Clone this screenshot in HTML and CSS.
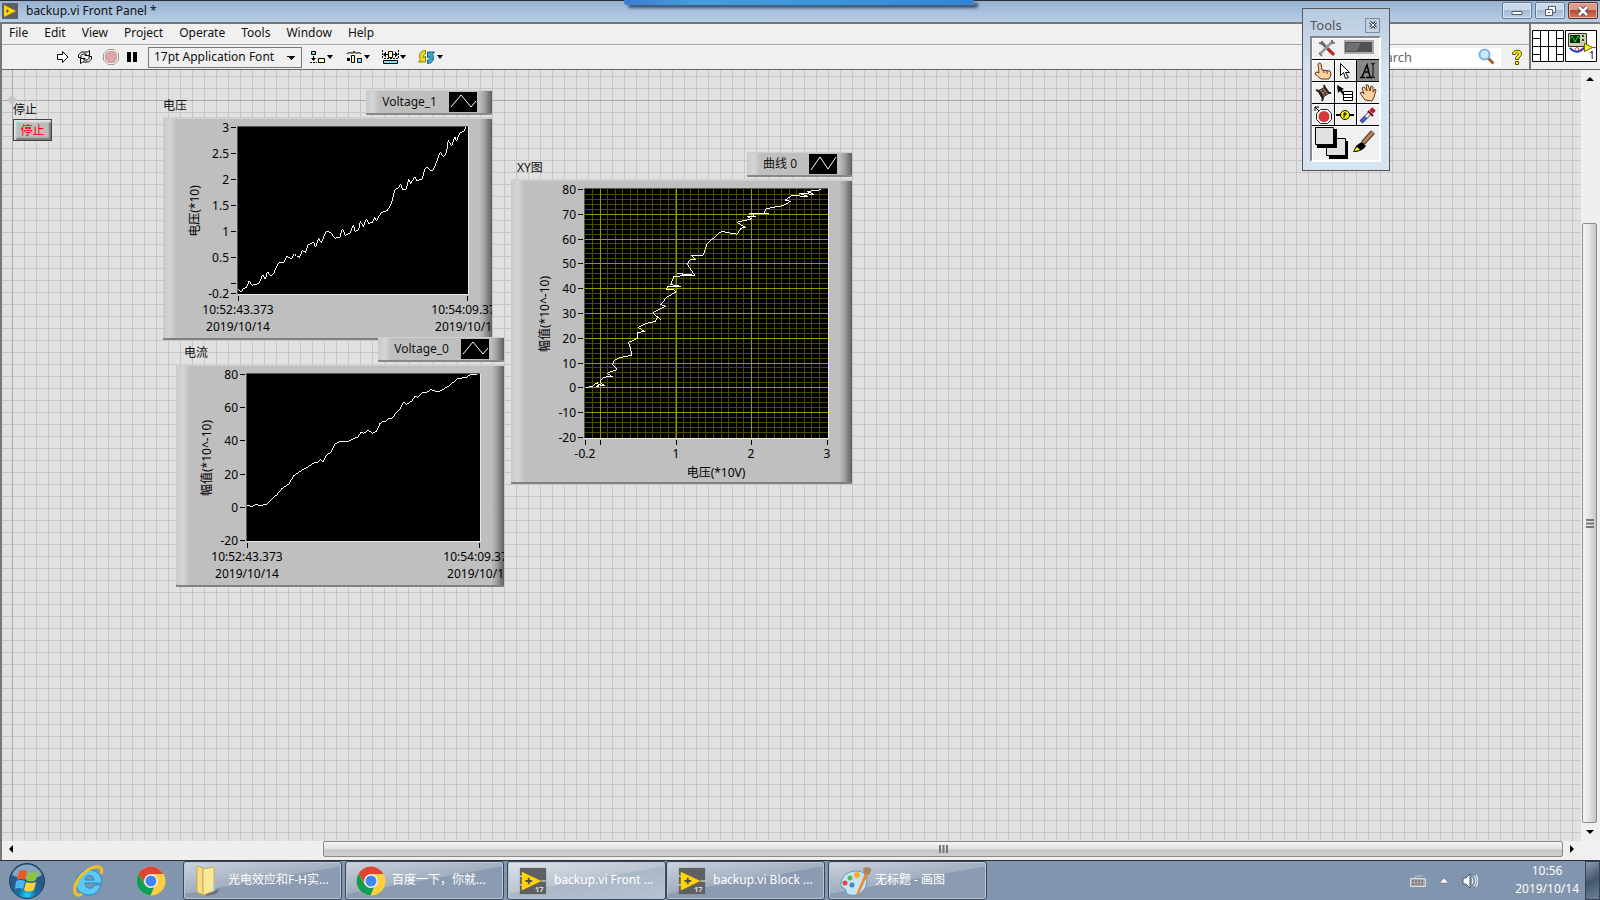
FILE: index.html
```html
<!DOCTYPE html>
<html lang="zh-CN">
<head>
<meta charset="utf-8">
<title>backup.vi Front Panel *</title>
<link rel="stylesheet" href="styles.css">
</head>
<body>
<svg class="defs" aria-hidden="true">
  <defs>
    <symbol id="lv" viewBox="0 0 32 28"><path d="M2 0h28v28H2z" fill="#5f6062"/><path d="M0 9h6M0 18h6M25 14h7" stroke="#b9c3cc" stroke-width="1.5"/><path d="M4 4l21 10L4 24z" fill="#ffd400"/><path d="M8 14h7M11.500 10.500v7" stroke="#505050" stroke-width="2"/><text x="18" y="26" font-size="8" font-weight="700" fill="#ddd" font-family="Noto Sans">17</text></symbol>
    <symbol id="chrome" viewBox="0 0 30 30"><circle cx="15" cy="15" r="14.500" fill="#ffcd42"/><path d="M2.500 7.700A14.500 14.500 0 0 1 27.600 8H15a7 7 0 0 0-6.500 9z" fill="#db4437"/><path d="M2.500 7.700L8.800 18.500A7 7 0 0 0 18 21.300L14.500 29.500A14.500 14.500 0 0 1 2.500 7.700z" fill="#0f9d58"/><circle cx="15" cy="15" r="6.800" fill="#f5f5f5"/><circle cx="15" cy="15" r="5.500" fill="#4285f4"/></symbol>
    <symbol id="wave" viewBox="0 0 28 20"><path d="M0 0h28v20H0z"/><path d="M2 15L12 3l10 12 5-6" fill="none" stroke="#fff"/></symbol>
  </defs>
</svg>
<div class="window">
  <header class="titlebar">
    <svg class="app-icon" width="16" height="16" viewBox="0 0 16 16"><path d="M0 0h16v16H0z" fill="#5f6062"/><path d="M2 2l12 6-12 6z" fill="#ffd400"/><path d="M4 8h3M5.500 6.500v3" stroke="#555"/></svg>
    <span class="title">backup.vi Front Panel *</span>
    <div class="peek"></div>
    <div class="win-buttons">
      <button aria-label="Minimize"><svg width="12" height="10"><path d="M1 5.500h10v3H1z" fill="#fff" stroke="#555b66"/></svg></button>
      <button aria-label="Restore"><svg width="13" height="12"><path d="M4.500 1.500h7v6h-7z" fill="#fff" stroke="#555b66"/><path d="M1.500 4.500h7v6h-7z" fill="#fff" stroke="#555b66"/><path d="M4 7h2v1H4z" fill="#555b66"/></svg></button>
      <button class="close" aria-label="Close"><svg width="14" height="12"><path d="M3 2l8 8M11 2l-8 8" stroke="#4b4450" stroke-width="4.500"/><path d="M3 2l8 8M11 2l-8 8" stroke="#fff" stroke-width="2.500"/></svg></button>
    </div>
  </header>

  <div class="top">
    <div class="bars">
      <nav class="menubar">
        <button>File</button><button>Edit</button><button>View</button><button>Project</button><button>Operate</button><button>Tools</button><button>Window</button><button>Help</button>
      </nav>
      <div class="toolbar">
        <button aria-label="Run"><svg width="12" height="14"><path d="M.5 4.500h5v-3L11 7l-5.500 5.500v-3h-5z" fill="#fff" stroke="#000"/></svg></button>
        <button aria-label="Run continuously" class="loop"><svg width="16" height="14"><path d="M1.500 7.500V5l3-3h6l2-1.500v5H8L9.500 4h-4L4 5.500v2z" fill="#fff" stroke="#000"/><path d="M14.500 6.500V9l-3 3h-6l-2 1.500v-5H8L6.500 10h4L12 8.500v-2z" fill="#fff" stroke="#000"/></svg></button>
        <button aria-label="Abort"><svg width="16" height="16"><path d="M5 .5h6L15.500 5v6L11 15.500H5L.5 11V5z" fill="#eee" stroke="#999"/><path d="M5.500 2.500h5l3 3v5l-3 3h-5l-3-3v-5z" fill="#dda7aa" stroke="#c99"/></svg></button>
        <button aria-label="Pause" class="pause"><svg width="10" height="12"><path d="M0 1h4v10H0zM6 1h4v10H6z"/></svg></button>
        <select class="font" aria-label="Font"><option>17pt Application Font</option></select>
        <button aria-label="Align"><svg width="24" height="14"><path d="M1.500 1.500h4v3h-4z" fill="#7de3f4" stroke="#000"/><path d="M8.500 8.500h6v4h-6z" fill="#ffffa8" stroke="#000"/><path d="M0 12.500h7" stroke="#000" stroke-dasharray="2 1"/><path d="M3 6h1v2h2l-2.500 3L1 8h2zM17 5h6l-3 4z"/></svg></button>
        <button aria-label="Distribute"><svg width="24" height="14"><path d="M1 4c1-2 3-1 6-1 1 0 1-1 1-2 0 1 0 2 2 2 3 0 4-1 5 1" fill="none" stroke="#000"/><path d="M5.500 5.500h3v7h-3z" fill="#ffffa8" stroke="#000"/><path d="M11.500 8.500h4v4h-4z" fill="#7de3f4" stroke="#000"/><path d="M1 8h3v3H1zM18 5h6l-3 4z"/></svg></button>
        <button aria-label="Resize"><svg width="24" height="14"><path d="M6.500 1.500h4v6h-4z" fill="#ffffa8" stroke="#000"/><path d="M1.500 10.500h14v3h-14z" fill="#7de3f4" stroke="#000"/><path d="M.5 0v9M16.500 0v9M2 8.500h14" stroke="#000" stroke-dasharray="2 1"/><path d="M1 4.500l3-3V4h2v1H4v2.500zM16 4.500l-3-3V4h-2v1h2v2.500zM18 5h6l-3 4z"/></svg></button>
        <button aria-label="Reorder"><svg width="26" height="16"><path d="M7.500 1.500C2 1.500 0 7 2.500 10.500L.5 13h7V7L5.500 9C4.500 7.500 5.500 5.500 7.500 5z" fill="#e8dc20" stroke="#877e00"/><path d="M9.500 14.500c5.500 0 7.500-5.500 5-9l2-2.500h-7v6l2-2c1 1.500 0 3.500-2 4z" fill="#35a9c5" stroke="#126379"/><path d="M19 6h6l-3 4z"/></svg></button>
        <div class="search"><input aria-label="Search" placeholder="Search"><svg width="18" height="18"><path d="M9.500 9.500l6 6" stroke="#a65c2c" stroke-width="3"/><circle cx="6.500" cy="6.500" r="5" fill="#c8eaff" stroke="#7daee8" stroke-width="2"/></svg></div>
        <button class="help" aria-label="Help"><svg width="12" height="16"><path d="M1.500 5.500C1 0 11 0 10.500 5c0 3-3 3-3 5.500h-3C4 7 7.500 6.500 7.500 5c0-2-3-2-3 .5zM4.500 12.500h3v3h-3z" fill="#fff200" stroke="#555000"/></svg></button>
      </div>
    </div>
    <div class="vi-pane">
      <svg width="32" height="32"><path d="M.5.500h31v31H.5zM0 16.500h32M8.500 0v32M16.500 0v32M24.500 0v32M0 8.500h8M0 24.500h8M24 8.500h8M24 24.500h8" fill="#fff" stroke="#000"/></svg>
      <svg width="32" height="32"><path d="M.5.500h31v31H.5z" fill="#fff" stroke="#000"/><path d="M3.500 3.500h18v13h-18z" fill="#d0cdb0" stroke="#333"/><path d="M5 5h10v8H5z" fill="#062d08"/><path d="M5 9l2-3 3 6 3-6 2 3" fill="none" stroke="#24d634"/><circle cx="18" cy="6" r="1"/><circle cx="18" cy="10" r="1"/><path d="M5 18c4 5 9 5 14 0" fill="none" stroke="#1635c9" stroke-width="2"/><path d="M10 21c0-5 4-4 4-1s4-3 6-3" fill="none" stroke="#e22"/><path d="M19.500 13.500l8 4-8 4z" fill="#ff0" stroke="#660"/><path d="M27 17.500h4" stroke="#e22"/><text x="24" y="29" font-size="10" font-family="Noto Sans">1</text></svg>
    </div>
  </div>

  <main class="workspace">
    <div class="canvas">
      <svg class="origin" width="10" height="10"><path d="M5 0l5 5-5 5-5-5z" fill="#c4c4c4"/></svg>
      <div class="stop"><label for="stop">停止</label><button id="stop">停止</button></div>

      <section class="obj v1">
        <h2>电压</h2>
        <div class="legend"><span>Voltage_1</span><svg width="28" height="20"><use href="#wave"/></svg></div>
        <svg class="panel" width="329" height="223" viewBox="163 117 329 223">
          <path d="M238 127h230v167H238z"/><path class="lo" d="M237.500 294V126.500H468"/><path class="hi" d="M468.500 127v167.500H238"/>
          <path class="tick" d="M231 127.500h5M231 153.500h5M231 179.500h5M231 205.500h5M231 231.500h5M231 257.500h5M231 283.500h5M231 293.500h5M238.500 296v5M467.500 296v5"/>
          <g class="y"><text x="229" y="132">3</text><text x="229" y="158">2.5</text><text x="229" y="184">2</text><text x="229" y="210">1.5</text><text x="229" y="236">1</text><text x="229" y="262">0.5</text><text x="229" y="298">-0.2</text></g>
          <g class="x"><text x="238" y="314">10:52:43.373</text><text x="238" y="331">2019/10/14</text><text x="467" y="314">10:54:09.373</text><text x="467" y="331">2019/10/14</text></g>
          <text class="x" transform="translate(199 211) rotate(-90)">电压(*10)</text>
          <g transform="translate(150 80) scale(.33333)"><polyline class="trace" points="265,626 273,637 280,627 290,622 298,602 305,616 318,613 328,608 338,584 346,598 352,575 362,587 370,582 386,548 401,549 411,529 425,536 433,521 440,529 449,532 457,512 467,517 473,496 491,486 496,502 506,475 514,488 524,464 530,454 544,458 554,475 570,471 577,446 586,466 600,460 610,434 616,455 626,448 631,424 640,440 649,416 656,431 668,426 674,412 680,422 692,400 713,390 724,370 734,330 745,323 752,311 758,329 769,328 776,298 782,311 794,290 800,302 817,298 824,266 833,262 842,274 851,268 871,216 880,231 889,219 895,181 905,199 914,170 920,184 929,158 943,154 947,141"/></g>
        </svg>
      </section>

      <section class="obj v0">
        <h2>电流</h2>
        <div class="legend"><span>Voltage_0</span><svg width="28" height="20"><use href="#wave"/></svg></div>
        <svg class="panel" width="328" height="223" viewBox="176 364 328 223">
          <path d="M247 374h233v167H247z"/><path class="lo" d="M246.500 541V373.500H480"/><path class="hi" d="M480.500 374v167.500H247"/>
          <path class="tick" d="M240 374.500h5M240 407.500h5M240 440.500h5M240 474.500h5M240 507.500h5M240 540.500h5M247.500 543v5M479.500 543v5"/>
          <g class="y"><text x="238" y="379">80</text><text x="238" y="412">60</text><text x="238" y="445">40</text><text x="238" y="479">20</text><text x="238" y="512">0</text><text x="238" y="545">-20</text></g>
          <g class="x"><text x="247" y="561">10:52:43.373</text><text x="247" y="578">2019/10/14</text><text x="479" y="561">10:54:09.373</text><text x="479" y="578">2019/10/14</text></g>
          <text class="x" transform="translate(211 458) rotate(-90)">幅值(*10^-10)</text>
          <g transform="translate(160 330) scale(.33333)"><polyline class="trace" points="262,526 276,530 288,523 300,528 320,522 335,507 350,495 366,475 388,461 400,438 420,424 440,413 460,400 474,396 482,389 490,395 500,374 514,366 524,343 540,334 564,334 595,320 602,307 612,310 625,300 636,310 650,303 660,280 670,274 678,273 684,266 697,264 710,246 720,236 730,216 740,223 756,213 765,199 773,202 788,187 800,187 813,178 824,183 838,184 862,171 893,146 918,142 933,133 952,133"/></g>
        </svg>
      </section>

      <section class="obj xy">
        <h2>XY图</h2>
        <div class="legend"><span>曲线 0</span><svg width="28" height="20"><path d="M0 0h28v20H0z"/><path d="M2 16l9-13 8 12 8-12" fill="none" stroke="#fff"/></svg></div>
        <svg class="panel" width="341" height="305" viewBox="511 179 341 305">
          <path d="M585 189h243v249H585z"/>
          <path class="minor" id="minor"/>
          <path class="major" d="M600.500 189v249M676.500 189v249M751.500 189v249M585 214.500h243M585 239.500h243M585 263.500h243M585 288.500h243M585 313.500h243M585 338.500h243M585 363.500h243M585 387.500h243M585 412.500h243"/>
          <path class="lo" d="M584.500 438V188.500H828"/><path class="hi" d="M828.500 189v249.500H585"/>
          <path class="tick" d="M578 189.500h5M578 214.500h5M578 239.500h5M578 263.500h5M578 288.500h5M578 313.500h5M578 338.500h5M578 363.500h5M578 387.500h5M578 412.500h5M578 437.500h5M585.500 440v5M600.500 440v5M676.500 440v5M751.500 440v5M827.500 440v5"/>
          <g class="y"><text x="576" y="194">80</text><text x="576" y="219">70</text><text x="576" y="244">60</text><text x="576" y="268">50</text><text x="576" y="293">40</text><text x="576" y="318">30</text><text x="576" y="343">20</text><text x="576" y="368">10</text><text x="576" y="392">0</text><text x="576" y="417">-10</text><text x="576" y="442">-20</text></g>
          <g class="x"><text x="585" y="458">-0.2</text><text x="676" y="458">1</text><text x="751" y="458">2</text><text x="827" y="458">3</text><text x="716" y="477">电压(*10V)</text></g>
          <text class="x" transform="translate(549 314) rotate(-90)">幅值(*10^-10)</text>
          <g transform="translate(500 140) scale(.33333)"><polyline class="trace" points="258,743 280,738 292,727 296,738 288,740 302,733 300,738 314,737 300,728 305,716 325,708 338,710 320,700 352,688 338,673 344,660 360,653 395,646 393,632 386,607 414,595 412,577 434,575 414,562 440,550 467,544 472,530 482,539 458,518 497,499 482,494 500,472 527,456 520,448 498,448 503,439 543,439 512,434 522,409 580,406 530,400 584,406 562,372 570,360 587,358 575,346 610,346 622,310 664,274 712,283 722,265 737,262 710,247 757,236 740,230 767,230 748,220 808,222 792,218 798,206 848,197 872,184 856,180 875,167 923,169 898,160 943,163 920,155 963,149"/></g>
        </svg>
      </section>
    </div>
    <div class="vscroll"><button aria-label="Scroll up"><svg width="8" height="5"><path d="M4 0l4 4H0z"/></svg></button><div class="thumb"><svg width="8" height="9"><path d="M0 1h8M0 4.500h8M0 8h8" stroke="#777" stroke-width="2"/></svg></div><button aria-label="Scroll down"><svg width="8" height="5"><path d="M4 4l4-4H0z"/></svg></button></div>
    <div class="hscroll"><button aria-label="Scroll left"><svg width="5" height="8"><path d="M0 4l4-4v8z"/></svg></button><div class="thumb"><svg width="9" height="8"><path d="M1 0v8M4.500 0v8M8 0v8" stroke="#777" stroke-width="2"/></svg></div><button aria-label="Scroll right"><svg width="5" height="8"><path d="M4 4L0 0v8z"/></svg></button></div>
  </main>
</div>

<footer class="taskbar">
  <button class="launch" aria-label="Start"><svg width="38" height="38"><defs><radialGradient id="orb" cy=".9"><stop offset="0" stop-color="#22d3fb"/><stop offset=".5" stop-color="#1870a8"/><stop offset="1" stop-color="#2b5985"/></radialGradient></defs><circle cx="19" cy="19" r="17.500" fill="url(#orb)" stroke="#1e3d5c"/><path d="M4 13a16 16 0 0 1 30 0q-14 8-30 0z" fill="#b4cfe2" opacity=".65"/><path d="M11 9q4-2 8 0l-2 9q-4-2-8 0z" fill="#ed5a24"/><path d="M20 10q5 2 10-1l-2 9q-5 3-10 0z" fill="#8cc63f"/><path d="M8 19q4-2 9 0l-2 8q-4-2-8 0z" fill="#4eb5f3"/><path d="M18 20q5 2 10 0l-2 8q-5 3-10 0z" fill="#ffd13a"/></svg></button>
  <button class="launch ie" aria-label="Internet Explorer"><svg width="32" height="32"><path d="M16 5c8 0 13 5 13 13H12c0 6 8 7 9 2h7c-2 7-7 10-12 10C8 30 3 25 3 18S8 5 16 5zm-4 10h9c0-6-9-6-9 0z" fill="#5cc8f5" stroke="#2388c7"/><path d="M28 9C32-2 18 0 8 11-1 21 0 34 9 29" fill="none" stroke="#f3c21c" stroke-width="3"/></svg></button>
  <button class="launch" aria-label="Chrome"><svg width="30" height="30"><use href="#chrome"/></svg></button>
  <div class="tasks">
    <button class="task"><svg width="28" height="32"><path d="M12 27l14-3-4 5-10 2z" fill="#4d5a68" opacity=".6"/><path d="M3 1l6 2v27l-6-3z" fill="#f5de86" stroke="#c9a94c"/><path d="M9 4l11-2v24L9 30z" fill="#f9e79b" stroke="#cfae52"/><path d="M19 20h2v6h-2z" fill="#8fd4f4"/></svg><span>光电效应和F-H实...</span></button>
    <button class="task"><svg width="30" height="30"><use href="#chrome"/></svg><span>百度一下，你就...</span></button>
    <button class="task active"><svg width="30" height="28"><use href="#lv"/></svg><span>backup.vi Front ...</span></button>
    <button class="task joined"><svg width="30" height="28"><use href="#lv"/></svg><span>backup.vi Block ...</span></button>
    <button class="task paint"><svg width="32" height="32"><path d="M2 18C3 8 14 4 23 7c7 3 6 14 0 20-6 5-16 4-16-1 0-4-6-2-5-8z" fill="#c5e5f7" stroke="#5a9cc4"/><circle cx="6" cy="18" r="2.500" fill="#e8443e"/><circle cx="11" cy="13" r="2.500" fill="#5cb949"/><circle cx="18" cy="10" r="3" fill="#f6ae25"/><circle cx="13" cy="20" r="2.500" fill="#4a86b5"/><path d="M17 30l9-22 3 1-9 20z" fill="#ee8a2c"/><path d="M25 9l-1-6 4-1 5 2-3 6z" fill="#b18458"/></svg><span>无标题 - 画图</span></button>
  </div>
  <div class="tray">
    <svg width="16" height="14"><path d="M5 4c0-4 3 0 8-3" fill="none" stroke="#ccc"/><path d="M.5 4.500h15v8H.5z" fill="#aaa" stroke="#ddd"/><path d="M2 7h12M2 10h12" stroke="#555" stroke-dasharray="2 1"/></svg>
    <svg width="10" height="6"><path d="M5 0l4.500 5h-9z" fill="#fff" stroke="#51637a" stroke-width=".5"/></svg>
    <svg width="16" height="16"><path d="M1 5h3l4-4v14l-4-4H1z" fill="#fff" stroke="#465970"/><path d="M10 5q2 3 0 6M12 3q4 5 0 10M14 2q4 6 0 12" fill="none" stroke="#fff"/></svg>
    <div class="clock"><time>10:56</time><time>2019/10/14</time></div>
    <button class="show-desktop" aria-label="Show desktop"></button>
  </div>
</footer>

<aside class="tools">
  <div class="tools-head"><span>Tools</span><button aria-label="Close tools"><svg width="8" height="8"><path d="M1 1l6 6M7 1L1 7" stroke="#444c58" stroke-width="3"/><path d="M1 1l6 6M7 1L1 7" stroke="#fff"/></svg></button></div>
  <div class="tool-grid">
    <button class="auto" aria-label="Automatic tool selection"><svg width="68" height="21"><path d="M9 4l12 12" stroke="#666" stroke-width="3"/><path d="M21 3L8 16" stroke="#999" stroke-width="2.500"/><path d="M16 11l6 6" stroke="#c22222" stroke-width="3"/><path d="M7 5l3 1 0-3M23 5l-3 0 0-3M7 15l3 3" fill="none" stroke="#666" stroke-width="1.500"/><path d="M32 2h30v14H32z" fill="#aaa"/><path d="M33 4h27v10H33z" fill="#515151"/><path d="M34 5h15l-4 8H34z" fill="#707070"/></svg></button>
    <button aria-label="Operate value"><svg width="18" height="18"><path d="M5 11L4 2q2-2 3 0l1 6 8 1q2 3 0 6l-1 2H7L1 12q0-2 2-2z" fill="#ffd0a0" stroke="#5b3821"/><path d="M10 8v3M13 9v3" stroke="#5b3821"/></svg></button>
    <button aria-label="Position"><svg width="14" height="18"><path d="M2.500 1.500v12l3-3 2 6 3-1-3-5h4z" fill="#fff" stroke="#000"/></svg></button>
    <button class="on" aria-label="Edit text"><svg width="18" height="18"><path d="M1 15.500h5M7 15.500h6M3 15L8 3l3 12M5 10h5" fill="none" stroke="#000" stroke-width="1.500"/><path d="M12 1q2 0 2 2v11q0 2-2 2M16 1q-2 0-2 2M16 16q-2 0-2-2" fill="none" stroke="#000"/></svg></button>
    <button aria-label="Connect wire"><svg width="18" height="18"><path d="M4 7l7-4 4 6-7 5z" fill="#b08a75" stroke="#222"/><path d="M6 7l4 6M8 5l4 6M5 10l7-5M7 12l6-4" stroke="#3b2a20"/><path d="M2 6l3 1 4 7-1 3M10 1l1 3 4 5 2 0" fill="none" stroke="#222" stroke-width="2"/></svg></button>
    <button aria-label="Shortcut menu"><svg width="18" height="18"><path d="M1 1l1 8 2-2 3 4 2-1-3-4 2-1z"/><path d="M7.500 7.500h9v9h-9zM7 10.500h10M7 13.500h10" fill="#fff" stroke="#000"/></svg></button>
    <button aria-label="Scroll window"><svg width="18" height="18"><path d="M6 16L1 9l2-1 2 2-2-6 2-1 3 4-1-6h2l2 6 1-5 2 1v5l2-3 1 1-2 7-2 4z" fill="#ffd0a0" stroke="#5b3821"/></svg></button>
    <button aria-label="Breakpoint"><svg width="18" height="18"><path d="M6.500 3.500h7l4 4v6l-4 4h-7l-4-4v-6z" fill="#fff" stroke="#222"/><circle cx="10" cy="10.500" r="5.500" fill="#d63a3f"/><path d="M1 5V1h4M1 1l4 4" stroke="#000" fill="none"/></svg></button>
    <button aria-label="Probe"><svg width="18" height="12"><path d="M0 6h18" stroke="#000" stroke-width="2"/><circle cx="9" cy="6" r="4.500" fill="#ff0" stroke="#000"/><path d="M8 9V4h2v2H8" fill="none" stroke="#000"/></svg></button>
    <button aria-label="Get color"><svg width="18" height="18"><path d="M2 16L11 7" stroke="#335" stroke-width="4"/><path d="M2.500 15.500L7 11" stroke="#4a60e0" stroke-width="2.500"/><path d="M7 11l4-4" stroke="#fff" stroke-width="2.500"/><path d="M9 5l5 5" stroke="#7a0818" stroke-width="2"/><path d="M12 6l3-3" stroke="#c01530" stroke-width="5"/></svg></button>
    <button class="color" aria-label="Set color"><svg width="68" height="34"><path d="M17 15h19v18H17z"/><path d="M14.500 12.500h19v17h-19z" fill="#e1e1e1" stroke="#000"/><path d="M5 3h20v19H5z"/><path d="M3.500 1.500h18v17h-18z" fill="#e1e1e1" stroke="#000"/><path d="M51 17L61 6" stroke="#483020" stroke-width="5"/><path d="M51 17L61 6" stroke="#b78560" stroke-width="3"/><path d="M41 26q3-8 9-10l4 4q-4 6-13 6z"/><path d="M42 25l3-4 3 3z" fill="#ff0"/></svg></button>
  </div>
</aside>
<script src="script.js"></script>
</body>
</html>
```
FILE: script.js
```js
// Minor grid of the XY graph: every 0.1 on x, every 2 on y.
let d = '';
for (let i = -1; i < 30; i++) {
  d += `M${Math.floor(600 + i * 7.57) + 0.5} 189v249`;
}
for (let j = 1; j < 50; j++) {
  d += `M585 ${Math.floor(189.4 + j * 4.96) + 0.5}h243`;
}
document.getElementById('minor').setAttribute('d', d);
```
FILE: styles.css
```css
* { box-sizing: border-box; }
body { margin: 0; height: 100vh; display: flex; flex-direction: column; overflow: hidden; background: #f0f0f0; color: #111; font: 12px/16px "Noto Sans", "Noto Sans CJK SC", sans-serif; }
button { margin: 0; padding: 0; border: 0; background: none; color: inherit; font: inherit; }
svg { display: block; flex: none; overflow: hidden; }
.defs { position: absolute; width: 0; height: 0; }
.window { flex: 1; min-height: 0; display: flex; flex-direction: column; border-left: 2px solid #777; }
.titlebar { height: 24px; margin-left: -2px; padding: 0 0 2px 2px; display: flex; align-items: center; position: relative; border-top: 1px solid #2c2c34; border-bottom: 2px solid #777; background: linear-gradient(#98b2d1, #b6cee7); }
.title { margin-left: 8px; flex: 1; }
.peek { position: absolute; top: -1px; left: 39%; width: 350px; height: 5px; background: linear-gradient(90deg, #3c7cd2, #459edc 20%, #3a95dc 60%, #3484d6); border-radius: 0 0 3px 3px; box-shadow: 4px 3px 3px #3f536e; }
.win-buttons { display: flex; align-self: flex-start; gap: 3px; padding: 1px 2px 0 0; }
.win-buttons button { width: 30px; height: 17px; display: grid; place-items: center; border: 1px solid #667a94; border-radius: 2px; background: linear-gradient(#c9d8ea 45%, #a5bbd5 50%, #bccfe4); box-shadow: inset 0 0 0 1px #dce7f3; }
.win-buttons .close { background: linear-gradient(#dd9b8b 45%, #bd4a35 50%, #cf7b62); border-color: #5b2d2d; box-shadow: inset 0 0 0 1px #e6b5a9; }
.top { display: flex; border-bottom: 1px solid #666; }
.bars { flex: 1; }
.menubar { height: 21px; display: flex; align-items: center; gap: 16px; padding: 0 0 3px 7px; border-bottom: 1px solid #aaa; }
.toolbar { height: 24px; display: flex; align-items: center; padding: 0 6px 0 55px; gap: 12px; }
.loop { margin-left: -4px; }
.loop + button { margin-left: -2px; }
.pause { margin-left: -4px; }
.font { appearance: none; width: 154px; height: 21px; margin-left: -1px; padding: 0 5px; border: 1px solid #777; border-radius: 0; color: #111; font: inherit; background: linear-gradient(45deg, transparent 50%, #111 50%) 138px 8px / 4px 4px no-repeat, linear-gradient(-45deg, transparent 50%, #111 50%) 142px 8px / 4px 4px no-repeat, #f0f0f0; }
.font + button { margin-left: -4px; }
.search { width: 136px; height: 19px; margin-left: auto; display: flex; align-items: center; background: #fff; padding-right: 5px; font-size: 13px; }
.search input { flex: 1; min-width: 0; border: 0; outline: 0; background: none; padding: 0 0 0 6px; font: inherit; }
.search input::placeholder { color: #666; opacity: 1; }
.help { margin-left: -2px; }
.vi-pane { display: flex; gap: 1px; align-items: center; padding: 0 3px 1px 1px; border-left: 2px solid #777; }
.workspace { flex: 1; min-height: 0; display: grid; grid-template: 1fr 19px / 1fr 19px; }
.canvas { position: relative; overflow: hidden; background: linear-gradient(#a9a9a9, #a9a9a9) 0 30px / 100% 1px no-repeat, linear-gradient(#a9a9a9, #a9a9a9) 10px 0 / 1px 100% no-repeat, linear-gradient(#c6c6c6 1px, transparent 1px) 0 6px / 12px 12px, linear-gradient(90deg, #c6c6c6 1px, transparent 1px) 10px 0 / 12px 12px, #e1e1e1; }
.origin { position: absolute; left: 5px; top: 25px; }
.stop { position: absolute; left: 11px; top: 32px; display: grid; gap: 1px; }
.stop button { width: 39px; height: 22px; padding-top: 2px; color: #f00; border: 1px solid #444; background: #bdbdbd; box-shadow: inset 2px 2px 2px #e5e5e5, inset -2px -2px 2px #777; }
.obj { position: absolute; display: grid; grid-template-columns: 1fr max-content; white-space: nowrap; }
.obj h2 { margin: 0; padding: 8px 0 0; font: inherit; }
.v1 { left: 161px; top: 20px; width: 329px; }
.v0 { left: 174px; top: 267px; width: 328px; }
.v0 h2 { padding-left: 8px; }
.xy { left: 509px; top: 82px; width: 341px; }
.xy h2 { padding-left: 6px; }
.legend, .panel { background: linear-gradient(90deg, #cacaca, #d5d5d5 7px, #bfbfbf 13px, #bfbfbf calc(100% - 13px), #a5a5a5 calc(100% - 8px), #5e5e5e); border-radius: 1px; }
.legend { height: 25px; margin-bottom: 2px; padding: 0 15px 0 16px; display: flex; align-items: center; gap: 12px; border-top: 1px solid #d0d0d0; border-bottom: 2px solid #888; }
.panel { grid-column: 1 / 3; box-shadow: inset 0 2px #d0d0d0, inset 0 -2px #808080; fill: #000; }
.tick { stroke: #000; }
.lo { fill: none; stroke: #555; }
.hi { fill: none; stroke: #e8e8e8; }
.y { text-anchor: end; }
.x { text-anchor: middle; }
.trace { fill: none; stroke: #fff; stroke-width: 3; shape-rendering: crispEdges; }
.minor { stroke: #4b4b00; }
.major { stroke: #989800; }
.vscroll, .hscroll { display: flex; background: #efefef; }
.vscroll { flex-direction: column; padding: 0 3px 0 1px; }
.vscroll button { height: 18px; display: grid; place-items: center; }
.vscroll .thumb { height: 600px; margin-top: auto; background: linear-gradient(90deg, #f5f5f5, #e4e4e6 50%, #c5c5ca); }
.hscroll { padding: 0 0 3px; }
.hscroll button { width: 18px; display: grid; place-items: center; }
.hscroll .thumb { flex: 0 1 1240px; margin-left: auto; background: linear-gradient(#f5f5f5, #e4e4e4 45%, #c6c6c6 60%, #d0d0d0); }
.thumb { display: grid; place-items: center; border: 1px solid #8b8b8b; border-radius: 2px; }
.taskbar { height: 40px; flex: none; display: flex; background: #8195ae; border-top: 1px solid #29323e; color: #fff; }
.launch { width: 54px; display: grid; place-items: center; }
.ie { width: 70px; }
.tasks { display: flex; gap: 3px; padding-left: 5px; }
.task { width: 159px; display: flex; align-items: center; gap: 6px; padding-left: 10px; border: 1px solid #38475a; border-radius: 3px; background: linear-gradient(170deg, #cbd3de, #a1aebf 49%, #8b9bb1 50%, #8b9cb3); box-shadow: inset 0 0 0 1px #bac6d4; white-space: nowrap; }
.task span { padding-bottom: 1px; }
.task.active { background: linear-gradient(170deg, #dde2ea, #bac4d0 49%, #aab7c6 50%, #b7c3d1); }
.task.joined { margin-left: -3px; }
.task.paint { gap: 4px; }
.tray { margin-left: auto; display: flex; align-items: center; gap: 13px; }
.clock { display: grid; gap: 2px; margin-left: 24px; padding-bottom: 1px; text-align: center; }
.show-desktop { width: 15px; align-self: stretch; margin-left: -7px; border: 1px solid #34455a; background: linear-gradient(150deg, #8c9cb0, #44566e 50%, #71839a); }
.tools { position: absolute; right: 210px; top: 8px; width: 88px; padding: 6px 8px 8px 7px; border: 1px solid #555; background: linear-gradient(#b8cbe0, #d6e3f1 40%); }
.tools-head { height: 21px; padding: 0 1px 1px 0; display: flex; align-items: center; justify-content: space-between; color: #555; font-size: 13px; }
.tools-head button { width: 15px; height: 15px; display: grid; place-items: center; border: 1px solid #7c8ba3; }
.tool-grid { display: grid; grid-template: 21px 21px 21px 21px 34px / repeat(3, 1fr); gap: 1px; border: 2px solid; border-color: #888 #fff #fff #888; background: #000; }
.tool-grid button { display: grid; place-items: center; background: #f0f0f0; box-shadow: inset 1px 1px #fff; }
.tool-grid .on { background: #888; box-shadow: none; }
.tool-grid .auto, .tool-grid .color { grid-column: 1 / 4; }
```
